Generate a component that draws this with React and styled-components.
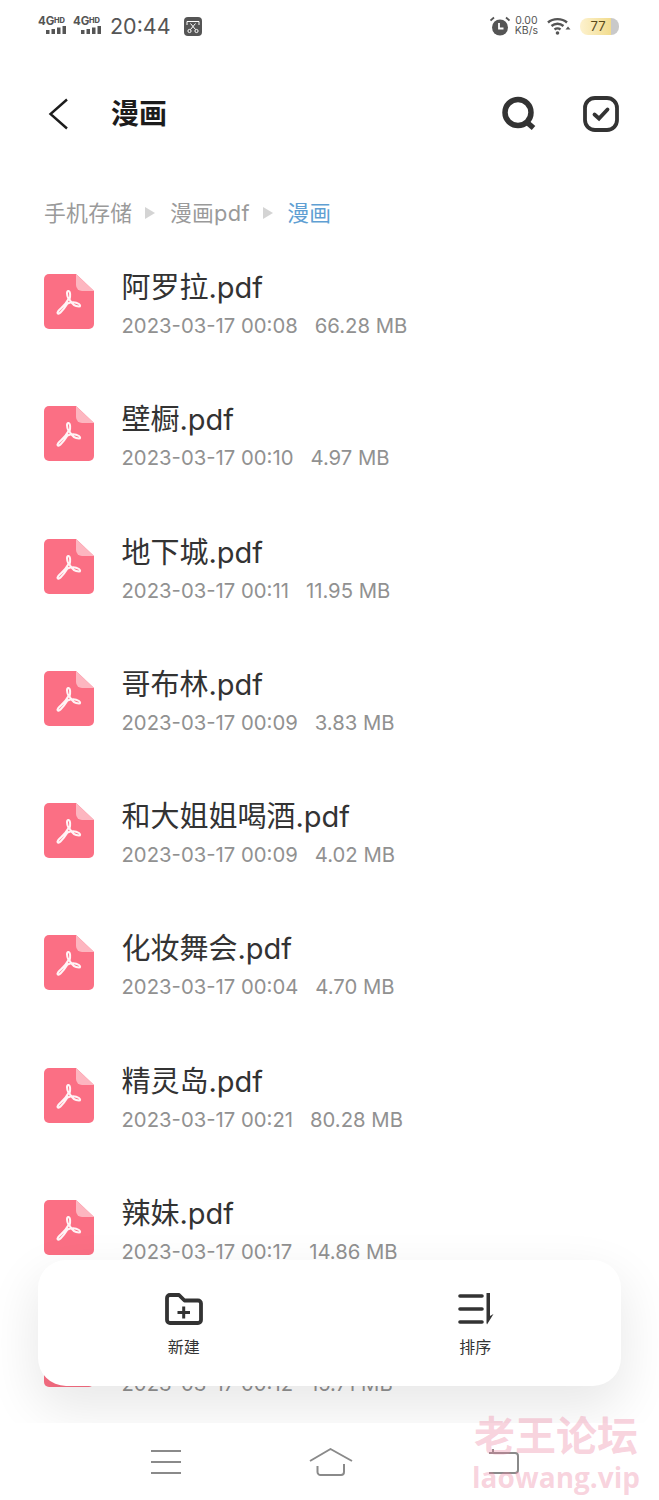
import React from 'react'
import styled, { createGlobalStyle } from 'styled-components'

const files = [
  { name: '阿罗拉.pdf', time: '00:08', size: '66.28 MB' },
  { name: '壁橱.pdf', time: '00:10', size: '4.97 MB' },
  { name: '地下城.pdf', time: '00:11', size: '11.95 MB' },
  { name: '哥布林.pdf', time: '00:09', size: '3.83 MB' },
  { name: '和大姐姐喝酒.pdf', time: '00:09', size: '4.02 MB' },
  { name: '化妆舞会.pdf', time: '00:04', size: '4.70 MB' },
  { name: '精灵岛.pdf', time: '00:21', size: '80.28 MB' },
  { name: '辣妹.pdf', time: '00:17', size: '14.86 MB' },
  { name: '', time: '00:12', size: '15.71 MB' },
]

const GlobalStyle = createGlobalStyle`
  html, body {
    margin: 0;
    padding: 0;
    background: #fff;
  }
  body {
    font-family: Inter, "Noto Sans CJK SC", sans-serif;
  }
`

const Page = styled.div`
  position: relative;
  width: 659px;
  height: 1500px;
  overflow: hidden;
  display: flex;
  flex-direction: column;
  background: #fff;
`

const StatusBar = styled.div`
  height: 52px;
  flex: none;
  display: flex;
  align-items: center;
  justify-content: space-between;
  padding: 0 40px 0 38px;
  color: #555;
`

const StatusGroup = styled.div`
  display: flex;
  align-items: center;
  gap: ${props => props.$gap || 0}px;
`

const Clock = styled.span`
  font-size: 21.5px;
  margin: 0 8px 0 2px;
  color: #555;
`

const Speed = styled.div`
  display: flex;
  flex-direction: column;
  align-items: center;
  font-size: 10.5px;
  line-height: 10px;
  margin: 0 9px 0 5px;
  color: #555;
`

const Battery = styled.div`
  width: 39px;
  height: 17px;
  margin-left: 9px;
  border-radius: 8px;
  background: linear-gradient(to right, #fdf2cf 0, #f2dc8e 79%, #c9c9c9 79%);
  color: #5a4a1c;
  font-size: 13px;
  line-height: 17px;
  text-align: center;
  padding-right: 3px;
  box-sizing: border-box;
`

const Header = styled.div`
  height: 124px;
  flex: none;
  display: flex;
  align-items: center;
  padding: 0 40px 0 44px;
`

const Title = styled.h1`
  flex: 1;
  margin: 0 0 4px 43px;
  font-size: 28px;
  line-height: 40px;
  font-weight: 700;
  color: #1c1c1c;
  font-family: "Noto Sans CJK SC", sans-serif;
`

const HeaderAction = styled.div`
  display: flex;
  margin-left: ${props => props.$gap}px;
`

const Crumbs = styled.div`
  height: 74px;
  flex: none;
  display: flex;
  align-items: center;
  padding: 0 0 4px 44px;
  box-sizing: border-box;
  font-size: 21.8px;
  letter-spacing: 0.3px;
`

const Crumb = styled.span`
  color: ${props => (props.$active ? '#5f9fd3' : '#9a9a9a')};
`

const CrumbArrow = styled.span`
  width: 0;
  height: 0;
  margin: 4px 14.5px 0 13px;
  border-style: solid;
  border-width: 6px 0 6px 10px;
  border-color: transparent transparent transparent #d4d4d4;
`

const List = styled.ul`
  list-style: none;
  margin: 0;
  padding: 0;
  flex: 1;
  min-height: 0;
  overflow: hidden;
`

const Row = styled.li`
  height: 132.3px;
  display: flex;
  align-items: flex-start;
  padding: 0 0 0 44px;
`

const FileIconBox = styled.div`
  flex: none;
  width: 50px;
  height: 55px;
  margin-top: 24px;
  margin-right: 27.5px;
`

const FileText = styled.div`
  display: flex;
  flex-direction: column;
`

const FileName = styled.div`
  height: 40px;
  margin-top: 18px;
  font-size: 29px;
  line-height: 40px;
  color: #333;
`

const FileMeta = styled.div`
  margin-top: 5px;
  display: flex;
  font-size: 20.3px;
  line-height: 26px;
  color: #919191;
`

const FileSize = styled.span`
  margin-left: 17px;
`

const FloatBar = styled.div`
  position: absolute;
  left: 38px;
  top: 1260px;
  width: 583px;
  height: 126px;
  display: flex;
  border-radius: 28px;
  background: #fff;
  box-shadow: 0 20px 50px 4px rgba(0, 0, 0, 0.09);
`

const FloatAction = styled.div`
  flex: 1;
  display: flex;
  flex-direction: column;
  align-items: center;
  padding-top: 33px;
  box-sizing: border-box;
`

const FloatLabel = styled.span`
  margin-top: 10px;
  font-size: 16px;
  line-height: 22px;
  color: #333;
  font-family: "Noto Sans CJK SC", sans-serif;
`

const NavBar = styled.div`
  position: relative;
  z-index: 2;
  height: 77px;
  flex: none;
  display: flex;
  align-items: center;
  padding-left: 150px;
  background: #fff;
`

const NavItem = styled.div`
  display: flex;
  margin-left: ${props => props.$gap || 0}px;
`

const Watermark = styled.div`
  position: absolute;
  z-index: 3;
  left: 472px;
  top: 1412px;
  width: 168px;
  display: flex;
  flex-direction: column;
  align-items: center;
  color: rgba(236, 130, 160, 0.35);
  font-weight: 700;
`

const WatermarkTitle = styled.span`
  font-size: 41px;
  line-height: 42px;
  white-space: nowrap;
  font-family: "Noto Sans CJK SC", sans-serif;
`

const WatermarkSub = styled.span`
  margin-top: 5px;
  font-size: 28px;
  line-height: 36px;
  font-family: "Open Sans", sans-serif;
  white-space: nowrap;
`

const Signal = () => (
  <svg width="30" height="22" viewBox="0 0 30 22">
    <text x="0" y="10" fontSize="11.5" fontWeight="700" fill="#555" fontFamily="Inter">4G</text>
    <text x="16" y="7.5" fontSize="7.5" fontWeight="800" fill="#555" fontFamily="Inter">HD</text>
    <path fill="#555" d="M8 15h3.5v4H8zM13.5 14h3.5v5h-3.5zM19 12.5h3.5V19H19zM24.5 11H28v8h-3.5z" />
  </svg>
)

const Scissors = () => (
  <svg width="18" height="19" viewBox="0 0 18 19">
    <rect width="18" height="19" rx="4" fill="#555" />
    <path fill="none" stroke="#fff" strokeWidth="1" d="M3 8V4.5H15V8M6.5 6.5l5 6M11.5 6.5l-5 6" />
    <circle cx="5.5" cy="14" r="1.6" fill="none" stroke="#fff" />
    <circle cx="12.5" cy="14" r="1.6" fill="none" stroke="#fff" />
  </svg>
)

const AlarmIcon = () => (
  <svg width="20" height="20" viewBox="0 0 20 20">
    <circle cx="10" cy="11.5" r="8" fill="#555" />
    <path fill="none" stroke="#fff" strokeWidth="1.8" d="M9 7V12.5H13.5" />
    <path fill="none" stroke="#555" strokeWidth="1.8" d="M0.5 4.5L4 1.5M19.5 4.5L16 1.5" />
  </svg>
)

const WifiIcon = () => (
  <svg width="24" height="18" viewBox="0 0 24 18">
    <g fill="none" stroke="#555" strokeWidth="2.4">
      <path d="M1 5.5C6 1 15 1 20 5.5" />
      <path d="M4.5 9C8 6 13 6 16.5 9" />
      <path d="M7.5 12.5C9.5 11 11.5 11 13.5 12.5" />
    </g>
    <circle cx="10.5" cy="16" r="1.8" fill="#555" />
    <path fill="#555" d="M21 9.5l2.5 3h-5z" />
  </svg>
)

const BackIcon = () => (
  <svg width="24" height="32" viewBox="0 0 24 32">
    <path fill="none" stroke="#1c1c1c" strokeWidth="2.4" d="M23 1.5L6.5 16L23 30.5" />
  </svg>
)

const SearchIcon = () => (
  <svg width="36" height="36" viewBox="0 0 36 36">
    <circle cx="17" cy="16.5" r="13" fill="none" stroke="#333" strokeWidth="5.5" />
    <path fill="none" stroke="#333" strokeWidth="5.5" d="M25 25.5L32.5 32" />
  </svg>
)

const CheckBoxIcon = () => (
  <svg width="36" height="36" viewBox="0 0 36 36">
    <rect x="2" y="2" width="32" height="32" rx="10" fill="none" stroke="#333" strokeWidth="3.8" />
    <path fill="none" stroke="#333" strokeWidth="3.8" strokeLinecap="round" d="M11.5 18.5L16 22.5L24.5 13.5" />
  </svg>
)

const PdfIcon = () => (
  <svg width="50" height="55" viewBox="0 0 50 55">
    <path fill="#fb6f84" d="M5 0H32L50 17V50a5 5 0 0 1-5 5H5a5 5 0 0 1-5-5V5a5 5 0 0 1 5-5z" />
    <path fill="#fdb6c0" d="M32 0L50 17H38a6 6 0 0 1-6-6z" />
    <path
      fill="none"
      stroke="#fff"
      strokeWidth="2"
      strokeLinejoin="round"
      strokeLinecap="round"
      opacity="0.92"
      d="M24.5 17C22.5 16.5 22.5 21 24.5 25C21.5 31 17 34 14 37.5C12.5 39.5 14.5 40.5 16.5 38.5C19.5 35.5 22 32 23.5 29.5C27 28 32 28 35 30C36.5 31 36.5 32.5 35 32.5C31 32.5 27.5 29.5 25.5 25.5C26.5 22 26.5 17.5 24.5 17Z"
    />
  </svg>
)

const FolderPlusIcon = () => (
  <svg width="38" height="32" viewBox="0 0 38 32">
    <path
      fill="none"
      stroke="#333"
      strokeWidth="3.8"
      strokeLinejoin="round"
      d="M2 5a3 3 0 0 1 3-3H14L19.5 7.5H33a3 3 0 0 1 3 3V27a3 3 0 0 1-3 3H5a3 3 0 0 1-3-3Z"
    />
    <path fill="none" stroke="#333" strokeWidth="3" d="M12.5 19.5H25M18.7 13.5V25.5" />
  </svg>
)

const SortIcon = () => (
  <svg width="38" height="32" viewBox="-2 0 38 32">
    <path fill="none" stroke="#333" strokeWidth="3.6" strokeLinecap="round" d="M2 3H24M2 16H24M2 29H24" />
    <path fill="#333" d="M28.5 0H32V23L35.5 21L29 31.5L28.5 30Z" />
  </svg>
)

const MenuIcon = () => (
  <svg width="32" height="26" viewBox="0 0 32 26">
    <path fill="none" stroke="#8a8a8a" strokeWidth="2" d="M1 2H31M1 13H31M1 24H31" />
  </svg>
)

const HomeIcon = () => (
  <svg width="44" height="30" viewBox="0 0 44 30">
    <path
      fill="none"
      stroke="#8a8a8a"
      strokeWidth="2"
      strokeLinejoin="round"
      d="M1 14L21.5 2L43 14M8.5 19V25a3 3 0 0 0 3 3H32a3 3 0 0 0 3-3V17"
    />
  </svg>
)

const RecentIcon = () => (
  <svg width="32" height="26" viewBox="0 0 32 26">
    <path
      fill="none"
      stroke="#8a8a8a"
      strokeWidth="2"
      d="M1 4H27a3 3 0 0 1 3 3V21a3 3 0 0 1-3 3H1M5 0V4"
    />
  </svg>
)

const App = () => (
  <Page>
    <GlobalStyle />
    <StatusBar>
      <StatusGroup $gap={5}>
        <Signal />
        <Signal />
        <Clock>20:44</Clock>
        <Scissors />
      </StatusGroup>
      <StatusGroup>
        <AlarmIcon />
        <Speed>
          <span>0.00</span>
          <span>KB/s</span>
        </Speed>
        <WifiIcon />
        <Battery>77</Battery>
      </StatusGroup>
    </StatusBar>
    <Header>
      <BackIcon />
      <Title>漫画</Title>
      <HeaderAction $gap={0}>
        <SearchIcon />
      </HeaderAction>
      <HeaderAction $gap={46}>
        <CheckBoxIcon />
      </HeaderAction>
    </Header>
    <Crumbs>
      <Crumb>手机存储</Crumb>
      <CrumbArrow />
      <Crumb>漫画pdf</Crumb>
      <CrumbArrow />
      <Crumb $active>漫画</Crumb>
    </Crumbs>
    <List>
      {files.map(file => (
        <Row key={file.time + file.size}>
          <FileIconBox>
            <PdfIcon />
          </FileIconBox>
          <FileText>
            <FileName>{file.name}</FileName>
            <FileMeta>
              <span>2023-03-17 {file.time}</span>
              <FileSize>{file.size}</FileSize>
            </FileMeta>
          </FileText>
        </Row>
      ))}
    </List>
    <FloatBar>
      <FloatAction>
        <FolderPlusIcon />
        <FloatLabel>新建</FloatLabel>
      </FloatAction>
      <FloatAction>
        <SortIcon />
        <FloatLabel>排序</FloatLabel>
      </FloatAction>
    </FloatBar>
    <NavBar>
      <NavItem>
        <MenuIcon />
      </NavItem>
      <NavItem $gap={127}>
        <HomeIcon />
      </NavItem>
      <NavItem $gap={135}>
        <RecentIcon />
      </NavItem>
    </NavBar>
    <Watermark>
      <WatermarkTitle>老王论坛</WatermarkTitle>
      <WatermarkSub>laowang.vip</WatermarkSub>
    </Watermark>
  </Page>
)

export default App
